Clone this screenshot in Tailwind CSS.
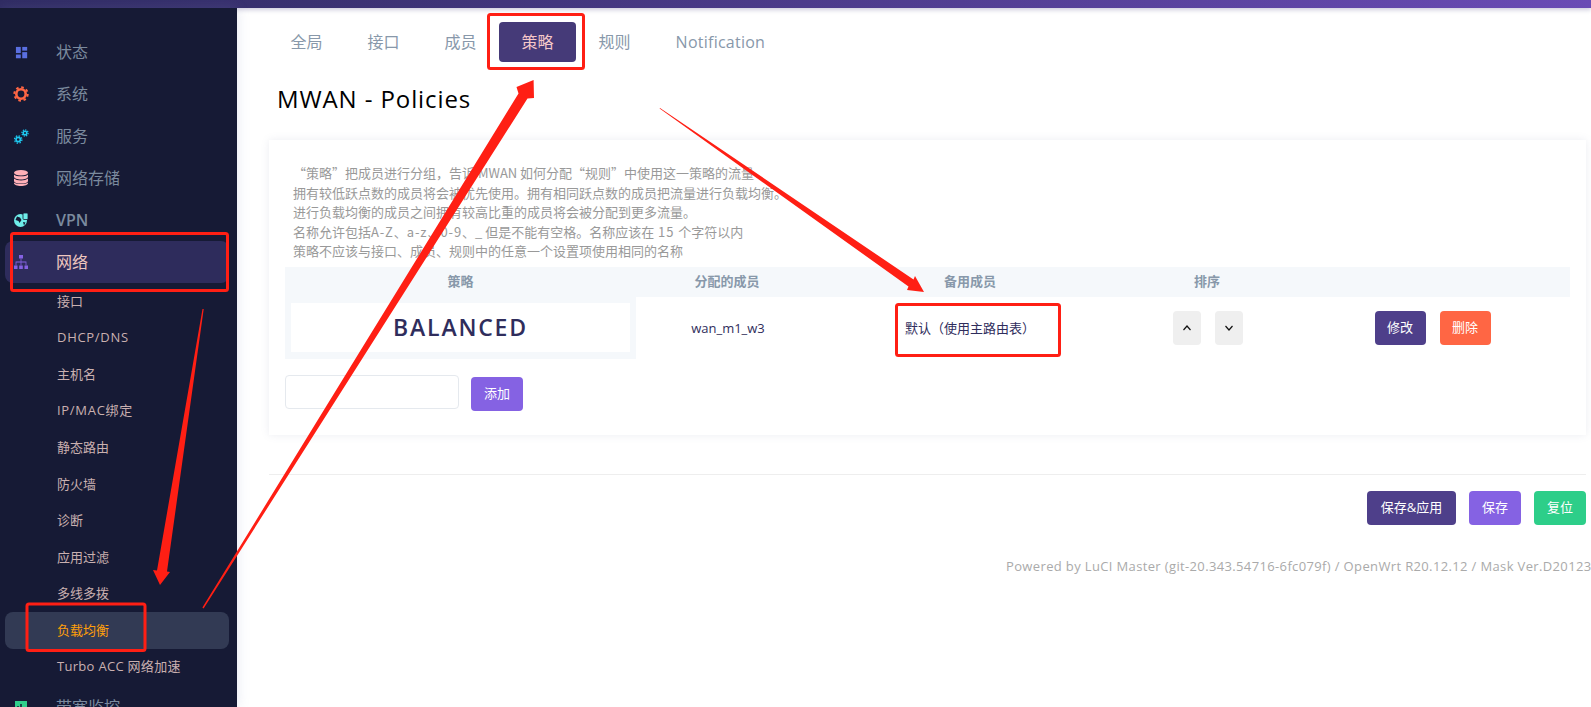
<!DOCTYPE html>
<html lang="zh">
<head>
    <meta charset="UTF-8">
    <title>MWAN - Policies</title>
    <script src="https://cdn.jsdelivr.net/npm/@tailwindcss/browser@4"></script>
</head>
<body class="relative h-screen overflow-hidden bg-white font-['Open_Sans','Noto_Sans_CJK_SC',sans-serif]">
    <!-- Top bar -->
    <div class="h-2 bg-gradient-to-r from-[#2f2b62] to-[#6a4bb5] shadow-[0_2px_4px_rgba(60,50,120,0.25)]"></div>

    <div class="flex h-[699px]">
        <!-- Sidebar -->
        <aside class="relative w-[237px] shrink-0 overflow-hidden bg-[#161a35] pt-[23px] shadow-[0_0_12px_rgba(120,130,180,0.2)]">
            <div class="flex h-[42px] items-center pl-[15px] text-base text-[#7b8a9e]">
                <svg class="mr-[28px] h-[13px] w-[13px]" viewBox="0 0 14 14" fill="#5a6fe0"><rect x="1" y="1" width="5.2" height="6.6"/><rect x="1" y="9.2" width="5.2" height="4"/><rect x="7.8" y="1" width="5.3" height="4"/><rect x="7.8" y="6.6" width="5.3" height="6.6"/></svg>
                <span>状态</span>
            </div>
            <div class="flex h-[42px] items-center pl-[13px] text-base text-[#7b8a9e]">
                <svg class="mr-[27px] h-[16px] w-[16px]" viewBox="0 0 16 16" fill="none" stroke="#ff6644"><circle cx="8" cy="8" r="4.7" stroke-width="2.6"/><circle cx="8" cy="8" r="6.7" stroke-width="2" stroke-dasharray="2.6 2.66"/></svg>
                <span>系统</span>
            </div>
            <div class="flex h-[42px] items-center pl-[14px] text-base text-[#7b8a9e]">
                <svg class="mr-[27px] h-[15px] w-[15px]" viewBox="0 0 15 15" fill="none" stroke="#1ec8f0"><circle cx="4.2" cy="10.5" r="2.2" stroke-width="1.7"/><circle cx="4.2" cy="10.5" r="3.7" stroke-width="1.3" stroke-dasharray="1.5 1.4"/><circle cx="11" cy="4" r="1.8" stroke-width="1.5"/><circle cx="11" cy="4" r="3.1" stroke-width="1.2" stroke-dasharray="1.3 1.1"/></svg>
                <span>服务</span>
            </div>
            <div class="flex h-[42px] items-center pl-[14px] text-base text-[#7b8a9e]">
                <svg class="mr-[28px] h-[16px] w-[14px]" viewBox="0 0 14 16" fill="#ffb0b8"><ellipse cx="7" cy="2.8" rx="7" ry="2.8"/><path d="M0 4.4c1.5 1.4 4 1.9 7 1.900s5.500-.5 7-1.900v2.400c0 1.500-3.100 2.700-7 2.700s-7-1.200-7-2.700z"/><path d="M0 8.600c1.500 1.300 4 1.900 7 1.900s5.500-.6 7-1.900v2.300c0 1.500-3.100 2.700-7 2.700s-7-1.200-7-2.700z"/><path d="M0 12.400c1.500 1.200 4 1.700 7 1.700s5.500-.5 7-1.700v.9c0 1.500-3.100 2.700-7 2.700s-7-1.200-7-2.700z"/></svg>
                <span>网络存储</span>
            </div>
            <div class="flex h-[42px] items-center pl-[14px] text-base font-semibold text-[#7b8a9e]">
                <svg class="mr-[28px] h-[14px] w-[14px]" viewBox="0 0 14 14"><circle cx="6.500" cy="7.500" r="6.500" fill="#6eeeea"/><path d="M3 3.500l3 1 1.500 2.500-2 3-1-2-3-1zM9 9l2.500.5-1.500 3z" fill="#161a35"/><rect x="9" y="0" width="5" height="6.500" rx="1" fill="#6eeeea" stroke="#161a35" stroke-width=".8"/></svg>
                <span>VPN</span>
            </div>
            <div class="ml-[5px] mr-2 flex h-[42px] items-center rounded-lg bg-[#2e2c5c] pl-[9px] text-base text-[#f0c8c0]">
                <svg class="mr-[28px] h-[14px] w-[14px]" viewBox="0 0 14 14" fill="#8562e3"><rect x="5" y="0" width="4" height="3.500"/><rect x="0" y="10.500" width="3.500" height="3.500"/><rect x="5.200" y="10.500" width="3.600" height="3.500"/><rect x="10.500" y="10.500" width="3.500" height="3.500"/><path d="M6.600 3.500h.8V6.600h5V10.500h-.8V7.400H7.400V10.500h-.8V7.400H2.400V10.500h-.8V6.600h5z"/></svg>
                <span>网络</span>
            </div>
            <!-- Submenu -->
            <div class="text-[13px] text-[#c9b0b0]">
                <div class="flex h-[36.6px] items-center pl-[57px]">接口</div>
                <div class="flex h-[36.6px] items-center pl-[57px] tracking-[0.7px]">DHCP/DNS</div>
                <div class="flex h-[36.6px] items-center pl-[57px]">主机名</div>
                <div class="flex h-[36.6px] items-center pl-[57px] tracking-[0.7px]">IP/MAC绑定</div>
                <div class="flex h-[36.6px] items-center pl-[57px]">静态路由</div>
                <div class="flex h-[36.6px] items-center pl-[57px]">防火墙</div>
                <div class="flex h-[36.6px] items-center pl-[57px]">诊断</div>
                <div class="flex h-[36.6px] items-center pl-[57px]">应用过滤</div>
                <div class="flex h-[36.6px] items-center pl-[57px]">多线多拨</div>
                <div class="ml-[5px] mr-2 flex h-[36.6px] items-center rounded-lg bg-[#323a54] pl-[52px] text-[#ff9f0a]">负载均衡</div>
                <div class="flex h-[36.6px] items-center pl-[57px] tracking-[0.3px]">Turbo ACC 网络加速</div>
            </div>
            <div class="flex h-[42px] items-center pl-[15px] text-base text-[#7b8a9e]">
                <svg class="mr-[29px] h-[12px] w-[12px]" viewBox="0 0 12 12"><rect width="12" height="12" fill="#2fcf8b"/><path d="M3 9V5M6 9V3M9 9V6" stroke="#161a35" stroke-width="1.500"/></svg>
                <span>带宽监控</span>
            </div>
        </aside>

        <!-- Main -->
        <main class="min-w-0 flex-1 pl-[32px] pr-[5px]">
            <nav class="-ml-px mt-[14px] flex h-10 items-center text-base text-[#8898aa]">
                <a class="px-[22.5px]">全局</a>
                <a class="px-[22.5px]">接口</a>
                <a class="px-[22.5px]">成员</a>
                <a class="flex h-10 items-center rounded bg-[#453a78] px-[22.5px] text-[#f5c8c8]">策略</a>
                <a class="px-[22.5px]">规则</a>
                <a class="px-[22.5px] tracking-[0.25px]">Notification</a>
            </nav>
            <h2 class="mt-[20px] pl-[8px] text-2xl leading-[34px] tracking-[0.9px] text-black">MWAN - Policies</h2>

            <section class="mt-[24px] h-[295px] bg-white px-4 pt-[23px] shadow-[0_0_8px_rgba(120,130,160,0.14)]">
                <div class="pl-2 font-['Noto_Sans_CJK_SC',sans-serif] text-[13px] leading-[19.5px] text-[#999999]">
                    <div>“策略”把成员进行分组，告诉 MWAN 如何分配“规则”中使用这一策略的流量</div>
                    <div>拥有较低跃点数的成员将会被优先使用。拥有相同跃点数的成员把流量进行负载均衡。</div>
                    <div>进行负载均衡的成员之间拥有较高比重的成员将会被分配到更多流量。</div>
                    <div>名称允许包括<span class="tracking-[0.9px]">A-Z</span>、<span class="tracking-[0.9px]">a-z</span>、<span class="tracking-[0.9px]">0-9</span>、_ 但是不能有空格。名称应该在<span class="tracking-[0.9px]"> 15 </span>个字符以内</div>
                    <div>策略不应该与接口、成员、规则中的任意一个设置项使用相同的名称</div>
                </div>

                <table class="mt-[6px] w-[1285px] table-fixed border-collapse">
                    <thead>
                        <tr class="h-[30px] bg-[#f5f8fb] text-[13px] font-semibold text-[#8898aa]">
                            <th class="w-[351px] font-semibold">策略</th>
                            <th class="w-[182px] font-semibold">分配的成员</th>
                            <th class="w-[304px] font-semibold">备用成员</th>
                            <th class="w-[170px] font-semibold">排序</th>
                            <th></th>
                        </tr>
                    </thead>
                    <tbody>
                        <tr class="h-[62px] text-[13px] text-[#2f2d5c]">
                            <td class="bg-[#f5f8fb] px-[6px]">
                                <div class="flex h-[49px] items-center justify-center bg-white text-[23px] font-semibold tracking-[1.8px] text-[#2f2d5c]">BALANCED</div>
                            </td>
                            <td class="pl-[2px] pt-[2px] text-center">wan_m1_w3</td>
                            <td class="pl-[87px] pt-[2px]">默认（使用主路由表）</td>
                            <td>
                                <div class="flex justify-center gap-[14px] pl-[2px]">
                                    <button class="flex h-[34px] w-[28px] items-center justify-center rounded bg-[#efefef]"><svg class="h-[10px] w-[10px]" viewBox="0 0 10 10" fill="none" stroke="#111" stroke-width="1.200"><path d="M1.500 7L5 3l3.500 4"/></svg></button>
                                    <button class="flex h-[34px] w-[28px] items-center justify-center rounded bg-[#efefef]"><svg class="h-[10px] w-[10px]" viewBox="0 0 10 10" fill="none" stroke="#111" stroke-width="1.200"><path d="M1.500 3L5 7l3.500-4"/></svg></button>
                                </div>
                            </td>
                            <td>
                                <div class="flex justify-center gap-[14px] pl-[3px]">
                                    <button class="h-[34px] w-[51px] rounded bg-[#4e3f8a] text-white">修改</button>
                                    <button class="h-[34px] w-[51px] rounded bg-[#ff6644] text-white">删除</button>
                                </div>
                            </td>
                        </tr>
                    </tbody>
                </table>

                <div class="mt-4 flex items-start gap-3">
                    <input class="h-[34px] w-[174px] rounded border border-[#e5e9ee] bg-white" type="text">
                    <button class="mt-[2px] h-[34px] w-[52px] rounded bg-[#8562e3] text-[13px] text-white">添加</button>
                </div>
            </section>

            <div class="mt-[39px] border-t border-[#eeeeee]"></div>
            <div class="mt-4 flex justify-end gap-[13px] text-[13px] text-white">
                <button class="h-[34px] w-[89px] rounded bg-[#4e3f8a]">保存&amp;应用</button>
                <button class="h-[34px] w-[52px] rounded bg-[#8562e3]">保存</button>
                <button class="h-[34px] w-[52px] rounded bg-[#2dce89]">复位</button>
            </div>
            <div class="-mr-[5px] mt-[32px] whitespace-nowrap pl-[737px] text-[13px] tracking-[0.36px] text-[#aaaaaa]">Powered by LuCI Master (git-20.343.54716-6fc079f) / OpenWrt R20.12.12 / Mask Ver.D20123</div>
        </main>
    </div>

    <!-- Red annotations drawn over the screenshot -->
    <svg class="pointer-events-none absolute left-0 top-0 h-[707px] w-[1591px]" viewBox="0 0 1591 707" fill="none" stroke="#ff1f14" stroke-width="3">
        <rect x="488.500" y="14.500" width="95" height="54" rx="2"/>
        <rect x="11.500" y="233.500" width="216" height="57" rx="2"/>
        <rect x="27" y="604" width="118" height="46.500" rx="2"/>
        <rect x="896.500" y="304.500" width="163" height="51" rx="2"/>
        <g fill="#ff1f14" stroke="none">
            <polygon points="202.400,607.600 518.500,93.500 516.500,87 533.600,80 534,98 527.500,98.500 203.600,608.400"/>
            <polygon points="660,108 913.500,279.500 915,276 924,292 907,290 908.500,286.500 659.600,108.600"/>
            <polygon points="203.700,309 167,571.500 170,572 160,585 153,570 157,570.500 202.500,309"/>
        </g>
    </svg>
</body>
</html>
